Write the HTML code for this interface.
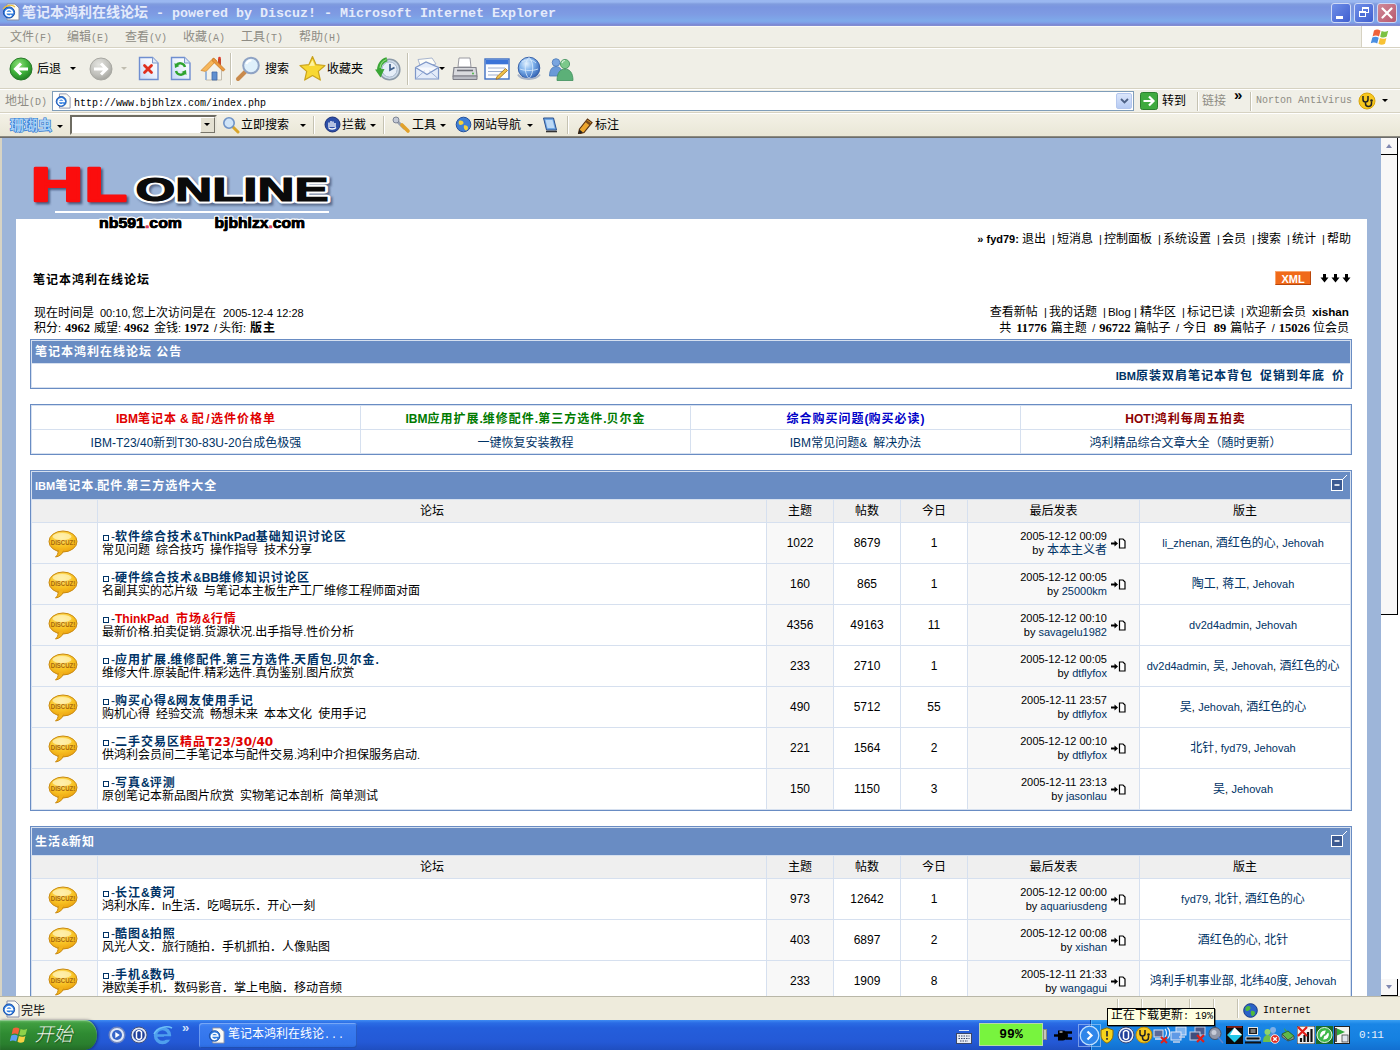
<!DOCTYPE html>
<html lang="zh-CN">
<head>
<meta charset="utf-8">
<title>笔记本鸿利在线论坛 - powered by Discuz!</title>
<style>
html,body{margin:0;padding:0;}
body{width:1400px;height:1050px;overflow:hidden;position:relative;background:#ece9d8;
 font-family:"Liberation Sans","Noto Sans CJK SC",sans-serif;font-size:12px;color:#000;line-height:15px;}
.abs{position:absolute;}
.ui{font-family:"Liberation Mono","Noto Sans CJK SC",monospace;}
/* ---------- title bar ---------- */
#titlebar{left:0;top:0;width:1400px;height:26px;
 background:linear-gradient(#9ab7f0 0,#9ab7f0 2px,#809cde 4px,#7a95e0 7px,#7e9be3 14px,#7eaaea 21px,#7f9ce6 23px,#7a86d0 25px,#8a94d4 26px);}
#titletext{left:22px;top:4px;height:17px;line-height:17px;font-size:14px;font-weight:bold;color:#e4ebfb;white-space:nowrap;letter-spacing:0;}
#titletext .l{font-family:"Liberation Mono",monospace;font-size:13.33px;}
.wbtn{top:3px;width:20px;height:20px;border-radius:3px;border:1px solid #cfdaf6;box-sizing:border-box;}
/* ---------- menu ---------- */
#menubar{left:0;top:26px;width:1400px;height:22px;background:#f0efe7;border-top:1px solid #fbfcf6;border-bottom:1px solid #d6d2c2;box-sizing:border-box;}
#menubar > span{position:absolute;top:4px;font-size:12px;color:#8e8c84;white-space:nowrap;line-height:15px;}
#menubar .l{font-family:"Liberation Mono",monospace;font-size:10px;}
#toolbar{left:0;top:48px;width:1400px;height:41px;background:#f0efe7;border-top:1px solid #fff;border-bottom:1px solid #d6d2c2;box-sizing:border-box;}
#addrbar{left:0;top:89px;width:1400px;height:24px;background:#f0efe7;border-top:1px solid #fff;border-bottom:1px solid #d6d2c2;box-sizing:border-box;}
#linkbar{left:0;top:113px;width:1400px;height:24px;background:linear-gradient(#f3f1e6,#e9e6d6);border-top:1px solid #fff;box-sizing:border-box;}
#chromeline{left:0;top:136px;width:1400px;height:2px;background:linear-gradient(#9c9a8c,#5d5e60);}
.tbtxt{position:absolute;font-size:12px;line-height:14px;white-space:nowrap;color:#000;}
.sep{position:absolute;width:1px;background:#c5c2b2;border-right:1px solid #fff;}
.dd{position:absolute;width:0;height:0;border-left:3px solid transparent;border-right:3px solid transparent;border-top:3px solid #000;}
/* ---------- viewport ---------- */
#leftedge{left:0;top:138px;width:2px;height:858px;background:#d8d4c4;}
#view{left:2px;top:138px;width:1379px;height:858px;background:#9db5d9;overflow:hidden;}
#vscroll{left:1381px;top:138px;width:19px;height:858px;background:#fff;}

/* ---------- page ---------- */
#page{position:absolute;left:-2px;top:-138px;width:1400px;height:1050px;word-spacing:2.7px;}
#wrap{left:16px;top:219px;width:1351px;height:800px;background:#fff;}
#page .l{font-size:11px;word-spacing:0;}
#page a{color:#003366;text-decoration:none;}
#page i{font-style:normal;font-size:11px;display:inline-block;width:11px;padding-left:6px;box-sizing:border-box;word-spacing:0;}
#page i.t{width:9px;padding-left:3px;}
#page i.s{width:12.4px;padding-left:5.5px;}
.sb{font-family:"Liberation Serif",serif;font-weight:bold;font-size:12.5px;word-spacing:0;}
.ln{height:15px;line-height:15px;white-space:nowrap;}
.ln > span{position:absolute;top:0;}
#page b{letter-spacing:1px;}
#page b.l,#page b .l{letter-spacing:0;}
.nav{white-space:nowrap;line-height:15px;}
.xml{left:1275px;top:271px;width:36px;height:14px;line-height:14px;background:#f06a1a;color:#fff;font-weight:bold;font-size:11px;text-align:center;border:1px solid #f8a46c;border-right-color:#b8470c;border-bottom-color:#b8470c;box-sizing:border-box;word-spacing:0;}
.arrows{left:1320px;top:271px;font-size:9px;line-height:14px;letter-spacing:1px;word-spacing:0;}
#flow{left:30px;top:339px;width:1322px;}
table.tb{border:1px solid #698cc3;background:#d6e0ef;border-spacing:1px;border-collapse:separate;margin:0 0 15px 0;width:1322px;table-layout:fixed;}
table.tb td{padding:0;font-size:12px;line-height:14px;}
td.hd{background:#698cc3;color:#fff;height:27px;padding-left:3px !important;position:relative;word-spacing:0;}
td.hd .col{position:absolute;right:1px;top:2px;}
tr.ch td{background:#efefef;height:22px;text-align:center;}
tr.r td{height:40px;}
.a1{background:#f8f8f8;}.a2{background:#fff;}
td.ic{text-align:center;}
td.ic svg{display:block;margin:1px auto 0 16px;}
td.fm{padding-left:4px !important;white-space:nowrap;}
.ft{line-height:14px;color:#003366;margin-top:0;position:relative;top:0;}
.ft b{color:#003366;}
.ft b.fr{color:#e00000;}
.ft b.fr2{color:#e00000;}
.ft .l{font-size:12px !important;}
.sq{display:inline-block;width:4px;height:4px;border:1px solid #003366;margin:0 2px 0 1px;vertical-align:0;}
.dj{font-family:"DejaVu Sans",sans-serif;font-size:12px;letter-spacing:0;}
.fd{line-height:13px;}
td.n{text-align:center;font-size:12px;}
td.lp{position:relative;white-space:nowrap;}
.lpt{position:absolute;right:32px;top:6px;text-align:right;line-height:14px;}
.lpi{position:absolute;right:13px;top:15px;}
td.md{text-align:center;white-space:nowrap;word-spacing:0;padding-right:4px !important;}
table.lk td{background:#fff;height:21px;padding-top:2px !important;text-align:center;width:329px;}
table.lk .l{font-size:12px !important;}
table.lk td:first-child{width:328px;}
.nv{color:#003366;}
/* ---------- status / taskbar ---------- */
#statusbar{left:0;top:996px;width:1400px;height:24px;background:#eeebdc;border-top:1px solid #b9b7a8;box-sizing:border-box;}
#taskbar{left:0;top:1020px;width:1400px;height:30px;
 background:linear-gradient(#3f8cf3 0,#2a6be4 3px,#245edb 8px,#2459d6 22px,#1f4ec0 30px);}
</style>
</head>
<body>
<!--CHROME-TOP-START-->
<div id="titlebar" class="abs"></div>
<svg class="abs" style="left:2px;top:3px" width="18" height="18" viewBox="0 0 18 18">
 <path d="M5 1h8l4 4v12H5z" fill="#fbfbf5" stroke="#8a8fa8" stroke-width="1"/>
 <circle cx="7" cy="9.5" r="5.6" fill="#2f7de0" stroke="#1b4fa8" stroke-width="1"/>
 <path d="M3.5 9.6h7a3.5 3.3 0 1 0-1 2.6" fill="none" stroke="#fff" stroke-width="1.6"/>
 <path d="M1 6c3-4 9-5 12-2" fill="none" stroke="#f0c030" stroke-width="1.2"/>
</svg>
<div id="titletext" class="abs">笔记本鸿利在线论坛<span class="l"> - powered by Discuz! - Microsoft Internet Explorer</span></div>
<div class="abs wbtn" style="left:1331px;background:linear-gradient(135deg,#6f8fe8,#3f5fd0);"><div class="abs" style="left:4px;top:12px;width:7px;height:3px;background:#fff"></div></div>
<div class="abs wbtn" style="left:1354px;background:linear-gradient(135deg,#6f8fe8,#3f5fd0);">
 <div class="abs" style="left:7px;top:3px;width:7px;height:6px;border:1px solid #fff;border-top-width:2px;box-sizing:border-box"></div>
 <div class="abs" style="left:4px;top:7px;width:7px;height:6px;border:1px solid #fff;border-top-width:2px;box-sizing:border-box;background:#4d6fd8"></div></div>
<div class="abs wbtn" style="left:1377px;background:linear-gradient(135deg,#d08a98,#b8586e);">
 <svg class="abs" style="left:3px;top:3px" width="12" height="12" viewBox="0 0 12 12"><path d="M1.5 1.5l9 9M10.5 1.5l-9 9" stroke="#fff" stroke-width="2.2" stroke-linecap="round"/></svg></div>

<div id="menubar" class="abs ui">
 <span style="left:10px">文件<span class="l">(F)</span></span>
 <span style="left:67px">编辑<span class="l">(E)</span></span>
 <span style="left:125px">查看<span class="l">(V)</span></span>
 <span style="left:183px">收藏<span class="l">(A)</span></span>
 <span style="left:241px">工具<span class="l">(T)</span></span>
 <span style="left:299px">帮助<span class="l">(H)</span></span>
</div>
<div class="abs" style="left:1361px;top:26px;width:39px;height:21px;background:#fff;border-left:1px solid #d6d2c2;box-sizing:border-box">
 <svg class="abs" style="left:8px;top:2px" width="22" height="18" viewBox="0 0 22 18">
  <path d="M4 2.5c2.5-1.4 4.5-1 6.5.2L9 8.6C7 7.4 5 7.2 2.6 8.4z" fill="#f0623a"/>
  <path d="M11.6 3c2 1 4.2 1.2 6.6-.2l-1.5 5.8c-2.4 1.3-4.400 1.200-6.500.1z" fill="#7cc242"/>
  <path d="M2.300 9.500c2.400-1.300 4.400-1 6.400.2L7.200 15.500c-2-1.200-4-1.500-6.400-.2z" fill="#4a8fe2"/>
  <path d="M9.900 10c2 1 4.200 1.300 6.500-.1L15 15.700c-2.400 1.300-4.400 1.200-6.500.1z" fill="#f8c234"/>
 </svg>
</div>

<div id="toolbar" class="abs"></div>
<!-- back -->
<svg class="abs" style="left:9px;top:57px" width="24" height="24" viewBox="0 0 24 24">
 <defs><radialGradient id="gb" cx="40%" cy="30%" r="75%"><stop offset="0" stop-color="#8fe07a"/><stop offset=".55" stop-color="#3fb13a"/><stop offset="1" stop-color="#1d7a22"/></radialGradient>
 <linearGradient id="pg" x1="0" y1="1" x2="1" y2="0"><stop offset="0" stop-color="#c4d8f8"/><stop offset=".6" stop-color="#f2f6fd"/><stop offset="1" stop-color="#ffffff"/></linearGradient><radialGradient id="gf" cx="40%" cy="30%" r="75%"><stop offset="0" stop-color="#e4e4e0"/><stop offset=".6" stop-color="#c2c2bd"/><stop offset="1" stop-color="#a0a09a"/></radialGradient></defs>
 <circle cx="12" cy="12" r="11" fill="url(#gb)" stroke="#2a7a2a" stroke-width="1"/>
 <path d="M19 12H7.500M12 6.500L6.500 12l5.500 5.500" fill="none" stroke="#fff" stroke-width="3" stroke-linejoin="miter"/>
</svg>
<div class="tbtxt" style="left:37px;top:62px">后退</div>
<div class="dd" style="left:70px;top:67px"></div>
<svg class="abs" style="left:89px;top:57px" width="24" height="24" viewBox="0 0 24 24">
 <circle cx="12" cy="12" r="11" fill="url(#gf)" stroke="#a8a8a2" stroke-width="1"/>
 <path d="M5 12h11.500M12 6.500l5.500 5.500-5.500 5.500" fill="none" stroke="#fff" stroke-width="3"/>
</svg>
<div class="dd" style="left:121px;top:67px;border-top-color:#c0bdb0"></div>
<!-- stop -->
<svg class="abs" style="left:138px;top:56px" width="22" height="25" viewBox="0 0 22 25">
 <path d="M1.500 1.500h13l5.500 5.500v16.500H1.500z" fill="url(#pg)" stroke="#6f8ed0" stroke-width="1.400"/>
 <path d="M14.500 1.500v5.500h5.500" fill="#dfe8f6" stroke="#7f9acb"/>
 <path d="M6.500 9.500l7 7M13.500 9.500l-7 7" stroke="#e0301e" stroke-width="2.800" stroke-linecap="round"/>
</svg>
<!-- refresh -->
<svg class="abs" style="left:170px;top:56px" width="22" height="25" viewBox="0 0 22 25">
 <path d="M1.500 1.500h13l5.500 5.500v16.500H1.500z" fill="url(#pg)" stroke="#6f8ed0" stroke-width="1.400"/>
 <path d="M14.500 1.500v5.500h5.500" fill="#dfe8f6" stroke="#7f9acb"/>
 <path d="M15 11a5 5 0 0 0-9-1.500" fill="none" stroke="#2fa32f" stroke-width="2.400"/>
 <path d="M4.500 7l.5 5 4.500-2z" fill="#2fa32f"/>
 <path d="M6 15a5 5 0 0 0 9 1.500" fill="none" stroke="#2fa32f" stroke-width="2.400"/>
 <path d="M16.500 19l-.5-5-4.500 2z" fill="#2fa32f"/>
</svg>
<!-- home -->
<svg class="abs" style="left:199px;top:55px" width="27" height="27" viewBox="0 0 27 27">
 <path d="M19 3.500h3v6.500h-3z" fill="#c5482c"/>
 <circle cx="20.500" cy="3" r="1.300" fill="#e03a2a"/>
 <path d="M7 13.500V25h15.500V13.500L15 6z" fill="#f4f2ea" stroke="#b8b0a0" stroke-width=".8"/>
 <path d="M2 15.500L14.500 3l3 2.500L7 16.500z" fill="#f6b65a" stroke="#d08830" stroke-width=".8"/>
 <path d="M14.500 3L26 14.500l-2 1.700L13 5.500z" fill="#ec9a3c" stroke="#c87a28" stroke-width=".8"/>
 <path d="M13 17h5v8h-5z" fill="#5f8fd0" stroke="#3f68a8" stroke-width=".8"/>
 <path d="M7 16.500v8.500" stroke="#9cb8dc" stroke-width="2"/>
</svg>
<div class="sep" style="left:230px;top:53px;height:32px"></div>
<!-- search -->
<svg class="abs" style="left:235px;top:56px" width="27" height="26" viewBox="0 0 27 26">
 <path d="M3 23l8.500-8.500" stroke="#c98a4c" stroke-width="4" stroke-linecap="round"/>
 <circle cx="16" cy="9.500" r="7.800" fill="#dff0fb" stroke="#8fa3c4" stroke-width="2"/>
 <path d="M11.500 8a5 5 0 0 1 5-3.500" fill="none" stroke="#fff" stroke-width="2"/>
</svg>
<div class="tbtxt" style="left:265px;top:62px">搜索</div>
<!-- star -->
<svg class="abs" style="left:299px;top:55px" width="27" height="27" viewBox="0 0 27 27">
 <path d="M13.500 1.500l3.600 8.200 8.900.8-6.700 5.900 2 8.700-7.800-4.600-7.800 4.600 2-8.700L1 10.500l8.900-.8z" fill="#f8d832" stroke="#c9a21c" stroke-width="1.200" stroke-linejoin="round"/>
 <path d="M13.500 5l2.400 5.800-5.900.3z" fill="#fdf3a0"/>
</svg>
<div class="tbtxt" style="left:327px;top:62px">收藏夹</div>
<!-- history -->
<svg class="abs" style="left:374px;top:56px" width="28" height="26" viewBox="0 0 28 26">
 <circle cx="15.500" cy="13.500" r="10.300" fill="#cfdcea" stroke="#8c9aa8" stroke-width="1.600"/>
 <circle cx="15.500" cy="13.500" r="7.600" fill="#e6eef8" stroke="#a8b8cc" stroke-width="1"/>
 <path d="M16 8v6l4.500-2.500" fill="none" stroke="#40608c" stroke-width="1.700"/>
 <path d="M13 3.200A10.500 10.500 0 0 0 5.500 16" fill="none" stroke="#3aa636" stroke-width="4"/>
 <path d="M1 13.500l9.500-.5-4 8.500z" fill="#3aa636"/>
 <path d="M12.500 3.500A10 10 0 0 0 6 12" fill="none" stroke="#8fdc7c" stroke-width="1.200"/>
</svg>
<div class="sep" style="left:407px;top:53px;height:32px"></div>
<!-- mail -->
<svg class="abs" style="left:414px;top:56px" width="26" height="26" viewBox="0 0 26 26">
 <path d="M4 3.500l14-1.500 4 6-15 4z" fill="#fdfdf8" stroke="#a9b6cf" stroke-width="1"/>
 <path d="M1.500 11.500L12 6l12.500 5.500v11.500h-23z" fill="#e4ecf9" stroke="#7d96c8" stroke-width="1.200"/>
 <path d="M1.500 11.500l11.500 7 11.500-7" fill="#f7f9fd" stroke="#7d96c8" stroke-width="1.200"/>
 <path d="M1.500 23l9-8M24.500 23l-9-8" stroke="#9fb3da" stroke-width="1"/>
</svg>
<div class="dd" style="left:439px;top:67px"></div>
<!-- print -->
<svg class="abs" style="left:452px;top:56px" width="26" height="26" viewBox="0 0 26 26">
 <path d="M7 2h11l1 9H6z" fill="#fff" stroke="#9a9aa0" stroke-width="1"/>
 <path d="M2 11.500h22l1 8.500H1z" fill="#d9dade" stroke="#85868e" stroke-width="1.200"/>
 <path d="M1 20h24v3.500H1z" fill="#b9bbc3" stroke="#7c7d86" stroke-width="1"/>
 <path d="M5 14.500h16" stroke="#6c6d75" stroke-width="1.600"/>
 <circle cx="21" cy="17.500" r="1" fill="#4fb848"/>
</svg>
<!-- edit -->
<svg class="abs" style="left:484px;top:57px" width="26" height="24" viewBox="0 0 26 24">
 <rect x="1" y="2" width="24" height="20" fill="#fcfdff" stroke="#3e6fc4" stroke-width="1.400"/>
 <rect x="1.700" y="2.700" width="22.600" height="4.600" fill="#3b74d8"/>
 <path d="M4 11h17M4 14.500h17M4 18h10" stroke="#9db0d0" stroke-width="1.200"/>
 <path d="M13 19.500l8.500-8 2 2-8.500 8-3 .8z" fill="#f0c24a" stroke="#9a6a1c" stroke-width=".8"/>
</svg>
<!-- globe -->
<svg class="abs" style="left:516px;top:56px" width="26" height="26" viewBox="0 0 26 26">
 <defs><radialGradient id="gg" cx="38%" cy="30%" r="75%"><stop offset="0" stop-color="#e4f2fe"/><stop offset=".45" stop-color="#7fb2ec"/><stop offset="1" stop-color="#2c5cb0"/></radialGradient></defs>
 <circle cx="13" cy="12" r="10.800" fill="url(#gg)" stroke="#3a62a8" stroke-width="1"/>
 <path d="M6 6c4-3 10-3 14 1M4 13c5 2 13 2 18 0M13 1.500c-5 5-5 16 0 21M13 1.500c5 5 5 16 0 21" fill="none" stroke="#dcecfc" stroke-width="1" opacity=".8"/>
 <path d="M2 18.500c3 5.500 17 6.500 22 0" fill="none" stroke="#a8b4c8" stroke-width="2"/>
</svg>
<!-- messenger -->
<svg class="abs" style="left:548px;top:56px" width="27" height="26" viewBox="0 0 27 26">
 <circle cx="8" cy="6.500" r="3.800" fill="#7aa6e0" stroke="#4a78b8" stroke-width=".8"/>
 <path d="M1.500 20c0-6.500 2.800-9.500 6.500-9.500s6.500 3 6.500 9.500z" fill="#6a9ad8" stroke="#4a78b8" stroke-width=".8"/>
 <circle cx="17" cy="8" r="4.600" fill="#7cc88a" stroke="#3f8f5c" stroke-width=".8"/>
 <path d="M9 24.500c0-8 3.500-11.500 8-11.500s8 3.500 8 11.500z" fill="#5cb078" stroke="#3f8f5c" stroke-width=".8"/>
 <path d="M14 7a3.500 3.500 0 0 1 3-2.500" fill="none" stroke="#d8f4dc" stroke-width="1.200"/>
</svg>

<div id="addrbar" class="abs"></div>
<div class="tbtxt ui" style="left:5px;top:95px;color:#8e8c84">地址<span style="font-family:'Liberation Mono',monospace;font-size:10px">(D)</span></div>
<div class="abs" style="left:52px;top:91px;width:1082px;height:20px;background:#fff;border:1px solid #7f9db9;box-sizing:border-box"></div>
<svg class="abs" style="left:55px;top:93px" width="16" height="16" viewBox="0 0 18 18">
 <path d="M5 1h8l4 4v12H5z" fill="#fbfbf5" stroke="#8a8fa8" stroke-width="1"/>
 <circle cx="7" cy="9.500" r="5.600" fill="#2f7de0" stroke="#1b4fa8" stroke-width="1"/>
 <path d="M3.500 9.600h7a3.500 3.300 0 1 0-1 2.600" fill="none" stroke="#fff" stroke-width="1.600"/>
</svg>
<div class="tbtxt" style="left:74px;top:97px;font-family:'Liberation Mono',monospace;font-size:10px;line-height:14px">http<span>:</span>//www.bjbhlzx.com/index.php</div>
<div class="abs" style="left:1116px;top:93px;width:16px;height:16px;background:linear-gradient(#dbe6fb,#b7cbf3);border:1px solid #b4c7ee;border-radius:2px;box-sizing:border-box">
 <svg class="abs" style="left:3px;top:4px" width="9" height="6" viewBox="0 0 9 6"><path d="M1 1l3.500 3.500L8 1" fill="none" stroke="#4d6185" stroke-width="1.800"/></svg></div>
<svg class="abs" style="left:1140px;top:92px" width="18" height="18" viewBox="0 0 18 18">
 <rect x=".5" y=".5" width="17" height="17" rx="2" fill="#3faa3f" stroke="#2c7f2e"/>
 <path d="M3.500 9h9M9 4.500L13.500 9 9 13.500" fill="none" stroke="#fff" stroke-width="2.200"/>
</svg>
<div class="tbtxt" style="left:1162px;top:94px">转到</div>
<div class="sep" style="left:1197px;top:92px;height:19px"></div>
<div class="tbtxt" style="left:1202px;top:94px;color:#8e8c84">链接</div>
<div class="tbtxt" style="left:1234px;top:88px;font-size:15px;font-weight:bold">»</div>
<div class="sep" style="left:1250px;top:92px;height:19px"></div>
<div class="tbtxt" style="left:1256px;top:94px;font-family:'Liberation Mono',monospace;font-size:10px;color:#8e8c84">Norton AntiVirus</div>
<svg class="abs" style="left:1358px;top:92px" width="18" height="18" viewBox="0 0 18 18">
 <circle cx="9" cy="9" r="8" fill="#f7c81e" stroke="#d9a40c" stroke-width="1"/>
 <path d="M5 4v3.500a2.500 2.500 0 0 0 5 0V4M7.500 10v1.500a3 3 0 0 0 6 0V9.500" fill="none" stroke="#222" stroke-width="1.500"/>
 <circle cx="13.500" cy="8.500" r="1.300" fill="#222"/>
</svg>
<div class="dd" style="left:1382px;top:99px"></div>

<div id="linkbar" class="abs"></div>
<div class="tbtxt" style="left:10px;top:118px;font-size:14px;line-height:15px;font-weight:bold;color:#a8d0f6;-webkit-text-stroke:1.2px #1c72d0;paint-order:stroke fill;letter-spacing:0">珊瑚虫</div>
<div class="dd" style="left:57px;top:125px"></div>
<div class="abs" style="left:70px;top:115px;width:147px;height:20px;background:#fff;border:2px solid;border-color:#6e6c62 #e8e6da #e8e6da #6e6c62;box-sizing:border-box">
 <div class="abs" style="right:0;top:0;width:15px;height:16px;background:#e4e1d2;border:1px solid;border-color:#fff #77756a #77756a #fff;box-sizing:border-box"><div class="dd" style="left:3px;top:5px"></div></div>
</div>
<svg class="abs" style="left:222px;top:116px" width="18" height="18" viewBox="0 0 18 18">
 <path d="M10.500 10.500l5.500 5.500" stroke="#d9a62a" stroke-width="3" stroke-linecap="round"/>
 <circle cx="7" cy="7" r="5.200" fill="#cfe4f7" stroke="#6f93c6" stroke-width="1.600"/>
</svg>
<div class="tbtxt" style="left:241px;top:118px">立即搜索</div>
<div class="dd" style="left:300px;top:124px"></div>
<div class="sep" style="left:313px;top:116px;height:18px"></div>
<svg class="abs" style="left:324px;top:116px" width="17" height="17" viewBox="0 0 17 17">
 <circle cx="8.500" cy="8.500" r="7.500" fill="#2c4fa8" stroke="#1a2f78"/>
 <path d="M5 11V6.500M7 11V5M9 11V5.500M11 11V7M4.500 11.500c1 2 6 2 7.500 0" fill="none" stroke="#fff" stroke-width="1.300"/>
</svg>
<div class="tbtxt" style="left:342px;top:118px">拦截</div>
<div class="dd" style="left:370px;top:124px"></div>
<div class="sep" style="left:383px;top:116px;height:18px"></div>
<svg class="abs" style="left:392px;top:116px" width="19" height="18" viewBox="0 0 19 18">
 <path d="M3 3l9 9" stroke="#9aa2b0" stroke-width="3" stroke-linecap="round"/>
 <circle cx="4" cy="4" r="3" fill="#c4cad6" stroke="#7d8596"/>
 <path d="M10 9l6 6" stroke="#e2a22a" stroke-width="3.600" stroke-linecap="round"/>
</svg>
<div class="tbtxt" style="left:412px;top:118px">工具</div>
<div class="dd" style="left:440px;top:124px"></div>
<svg class="abs" style="left:455px;top:116px" width="17" height="17" viewBox="0 0 17 17">
 <circle cx="8.500" cy="8.500" r="7.300" fill="#3f7fd6" stroke="#23509c"/>
 <path d="M4 5c2-1 4 0 4.500 1.500S7 9 5.500 9 3 7 4 5zM9 9.500c2-.5 4 .5 4 2.500s-2 3-3 2-1.500-3-1-4.500z" fill="#f4d23c"/>
</svg>
<div class="tbtxt" style="left:473px;top:118px">网站导航</div>
<div class="dd" style="left:527px;top:124px"></div>
<svg class="abs" style="left:542px;top:116px" width="16" height="18" viewBox="0 0 16 18">
 <path d="M1.500 2h10l3 12h-10z" fill="#6fa8e6" stroke="#2b4f8c"/>
 <path d="M4 15.500h11" stroke="#333" stroke-width="1.600"/>
 <path d="M3.500 4h7l2 8h-7z" fill="#bcd9f6"/>
</svg>
<div class="sep" style="left:567px;top:116px;height:18px"></div>
<svg class="abs" style="left:576px;top:116px" width="18" height="18" viewBox="0 0 18 18">
 <path d="M3.500 13L11.500 3l4.500 3.500L8 16.500l-5.500 1.500z" fill="#eda62c" stroke="#5a3210" stroke-width="1.200"/>
 <path d="M10 5l4.500 3.500" stroke="#7a4a18" stroke-width="2.400"/>
 <path d="M2 18l1.500-4.500 3.500 3z" fill="#222"/>
</svg>
<div class="tbtxt" style="left:595px;top:118px">标注</div>
<div id="chromeline" class="abs"></div>
<!--CHROME-TOP-END-->
<!--VIEW-START-->
<div id="leftedge" class="abs"></div>
<div id="view" class="abs"><div id="page">
<svg width="0" height="0" style="position:absolute"><defs><radialGradient id="dz" cx="45%" cy="30%" r="80%"><stop offset="0" stop-color="#ffe88a"/><stop offset=".5" stop-color="#f9c526"/><stop offset="1" stop-color="#e99a0a"/></radialGradient></defs></svg>
<div id="wrap" class="abs"></div>
<svg class="abs" style="left:26px;top:158px" width="312" height="80" viewBox="26 158 312 80">
 <defs><filter id="bl" x="-5%" y="-10%" width="110%" height="125%"><feGaussianBlur stdDeviation="1.100"/></filter></defs>
 <g font-family="Liberation Sans,sans-serif" font-weight="bold">
  <g fill="#2d3f63" stroke="#2d3f63" stroke-width="2.500" opacity=".75" filter="url(#bl)"><text x="32.800" y="202.600" font-size="48" textLength="52.500" lengthAdjust="spacingAndGlyphs">H</text><text x="86.500" y="202.600" font-size="48" textLength="42.500" lengthAdjust="spacingAndGlyphs">L</text></g>
  <g fill="#fb0d0d" stroke="#fb0d0d" stroke-width="2.500" stroke-linejoin="round"><text x="30.800" y="200.600" font-size="48" textLength="52.500" lengthAdjust="spacingAndGlyphs">H</text><text x="84.500" y="200.600" font-size="48" textLength="42.500" lengthAdjust="spacingAndGlyphs">L</text></g>
  <text x="137.500" y="203.300" font-size="33.500" textLength="193" lengthAdjust="spacingAndGlyphs" fill="#3a4a6a" opacity=".7" filter="url(#bl)" stroke="#3a4a6a" stroke-width="5">ONLINE</text>
  <text x="135.500" y="201.300" font-size="33.500" textLength="193" lengthAdjust="spacingAndGlyphs" fill="#0a0a0a" stroke="#fff" stroke-width="5" stroke-linejoin="round" paint-order="stroke fill">ONLINE</text>
  <text x="135.500" y="201.300" font-size="33.500" textLength="193" lengthAdjust="spacingAndGlyphs" fill="#0a0a0a" stroke="#0a0a0a" stroke-width="1.200">ONLINE</text>
 </g>
 <rect x="55" y="211" width="274" height="2" fill="#fff"/>
 <g font-family="Liberation Sans,sans-serif" font-weight="bold" font-size="14.500" stroke-linejoin="round">
  <text x="99" y="228" textLength="83" lengthAdjust="spacingAndGlyphs" fill="#000" stroke="#fff" stroke-width="3" paint-order="stroke fill">nb591<tspan fill="#e0405a">.</tspan>com</text>
  <text x="99" y="228" textLength="83" lengthAdjust="spacingAndGlyphs" fill="#000" stroke="#000" stroke-width=".700">nb591<tspan fill="#e0405a" stroke="#e0405a">.</tspan>com</text>
  <text x="214.500" y="228" textLength="90.500" lengthAdjust="spacingAndGlyphs" fill="#000" stroke="#fff" stroke-width="3" paint-order="stroke fill">bjbhlzx<tspan fill="#e0405a">.</tspan>com</text>
  <text x="214.500" y="228" textLength="90.500" lengthAdjust="spacingAndGlyphs" fill="#000" stroke="#000" stroke-width=".700">bjbhlzx<tspan fill="#e0405a" stroke="#e0405a">.</tspan>com</text>
 </g>
</svg>

<div class="abs nav" style="right:49px;top:232px"><b class="l">»&nbsp;fyd79:</b><span style="margin-left:3px">退出</span><i>|</i>短消息<i>|</i>控制面板<i>|</i>系统设置<i>|</i>会员<i>|</i>搜索<i>|</i>统计<i>|</i>帮助</div>
<div class="abs" style="left:33px;top:273px;line-height:15px"><b>笔记本鸿利在线论坛</b></div>
<div class="abs xml">XML</div>
<svg class="abs" style="left:1320px;top:274px" width="31" height="9" viewBox="0 0 31 9"><path id="dar" d="M3 0h3v3.500h2.500L4.500 8.500 .5 3.500H3z" fill="#000"/><path d="M3 0h3v3.500h2.500L4.500 8.500 .5 3.500H3z" transform="translate(11,0)"/><path d="M3 0h3v3.500h2.500L4.500 8.500 .5 3.500H3z" transform="translate(22,0)"/></svg>
<div class="abs ln" style="left:0;top:306px">
<span style="left:34px">现在时间是</span><span class="l" style="left:100px">00:10,</span><span style="left:132px">您上次访问是在</span><span class="l" style="left:223px">2005-12-4 12:28</span>
</div>
<div class="abs ln" style="left:0;top:321px">
<span style="left:34px">积分<span class="l">:</span></span><span class="sb" style="left:65px">4962</span><span style="left:94px">威望<span class="l">:</span></span><span class="sb" style="left:124px">4962</span><span style="left:154px">金钱<span class="l">:</span></span><span class="sb" style="left:184px">1972</span><span class="l" style="left:214px">/</span><span style="left:219px">头衔<span class="l">:</span></span><span style="left:250px"><b>版主</b></span>
</div>
<div class="abs nav" style="right:51px;top:304px">查看新帖<i>|</i>我的话题<i>|</i><span class="l" style="font-size:11.5px">Blog</span><i class="t">|</i>精华区<i>|</i>标记已读<i>|</i>欢迎新会员<b class="l" style="margin-left:6px;font-size:11.7px">xishan</b></div>
<div class="abs nav" style="right:51px;top:321px">共<span class="sb" style="margin:0 4px 0 5px">11776</span>篇主题<i class="s">/</i><span class="sb" style="margin:0 4px 0 0">96722</span>篇帖子<i class="s">/</i>今日<span class="sb" style="margin:0 4px 0 7px">89</span>篇帖子<i class="s">/</i><span class="sb" style="margin:0 3px 0 0">15026</span>位会员</div>
<div id="flow" class="abs">
<table class="tb" cellspacing="1" cellpadding="0"><tr><td class="hd" style="height:22px"><b>笔记本鸿利在线论坛 公告</b></td></tr>
<tr><td class="a2" style="height:23px;text-align:right;padding-right:5px;width:1313px"><b class="nv"><span class="l">IBM</span>原装双肩笔记本背包 促销到年底 价</b></td></tr></table>
<table class="tb lk" cellspacing="1" cellpadding="0">
<tr><td><b style="color:#e00000"><span class="l">IBM</span>笔记本<span class="l" style="padding:0 3px">&amp;</span>配<span class="l" style="padding:0 1.5px">/</span>选件价格单</b></td><td><b style="color:#007a00"><span class="l">IBM</span>应用扩展<span class="l">.</span>维修配件<span class="l">.</span>第三方选件<span class="l">.</span>贝尔金</b></td><td><b style="color:#0000c8">综合购买问题<span class="l">(</span>购买必读<span class="l">)</span></b></td><td><b style="color:#8b0000"><span class="l">HOT!</span>鸿利每周五拍卖</b></td></tr>
<tr><td><a><span class="l">IBM-T23/40</span>新到<span class="l">T30-83U-20</span>台成色极强</a></td><td><a>一键恢复安装教程</a></td><td><a><span class="l">IBM</span>常见问题<span class="l">&amp;</span> 解决办法</a></td><td><a>鸿利精品综合文章大全（随时更新）</a></td></tr>
</table>
<table class="tb" cellspacing="1" cellpadding="0"><colgroup><col style="width:65px"><col style="width:668px"><col style="width:66px"><col style="width:66px"><col style="width:66px"><col style="width:171px"><col style="width:210px"></colgroup><tr><td colspan="7" class="hd"><b><span class="l">IBM</span>笔记本<span class="l">.</span>配件<span class="l">.</span>第三方选件大全</b><svg class="col" width="18" height="17" viewBox="0 0 18 17"><rect x=".5" y="5.500" width="11" height="11" fill="#3c5a92" stroke="#fff" stroke-width="1"/><path d="M3.500 11h5" stroke="#fff" stroke-width="1.600"/><path d="M11.500 5.500l4.500-4.500" fill="none" stroke="#fff" stroke-width="1"/></svg></td></tr>
<tr class="ch"><td></td><td>论坛</td><td>主题</td><td>帖数</td><td>今日</td><td>最后发表</td><td>版主</td></tr>
<tr class="r"><td class="a1 ic"><svg width="30" height="28" viewBox="0 0 30 28"><ellipse cx="15" cy="11.5" rx="14" ry="10.5" fill="url(#dz)" stroke="#c98a12" stroke-width="1"/><path d="M10 20.500c.5 3-1 5-2.500 6.500 4-.5 7-3 8-6.500z" fill="#f3b41c" stroke="#c98a12" stroke-width="1"/><path d="M10.600 20.300l5 .1" stroke="#f3b41c" stroke-width="1.600"/><ellipse cx="14" cy="6.500" rx="9.500" ry="3.500" fill="#fff3b8" opacity=".75"/><text x="2.800" y="14.600" font-family="Liberation Sans,sans-serif" font-weight="bold" font-size="7.600" fill="#a8680c" textLength="24.500" lengthAdjust="spacingAndGlyphs">DISCUZ!</text></svg></td><td class="a2 fm"><div class="ft"><span class="sq"></span><span class="l">-</span><b>软件综合技术<span class="l">&amp;ThinkPad</span>基础知识讨论区</b></div><div class="fd">常见问题 综合技巧 操作指导 技术分享</div></td><td class="a1 n">1022</td><td class="a2 n">8679</td><td class="a2 n">1</td><td class="a1 lp"><div class="lpt"><span class="l">2005-12-12 00:09</span><br><span class="l">by </span><a>本本主义者</a></div><svg class="lpi" width="15" height="11" viewBox="0 0 15 11"><path d="M0 4.500h3.500V2.500L7 5.500 3.500 8.500V6.500H0z" fill="#000"/><path d="M8.500 1h3.500l2 2v7h-5.500z" fill="#fff" stroke="#000" stroke-width="1.200"/></svg></td><td class="a2 md"><a><span class="l">li_zhenan</span></a><span class="l">,</span> <a>酒红色的心</a><span class="l">,</span> <a><span class="l">Jehovah</span></a></td></tr>
<tr class="r"><td class="a1 ic"><svg width="30" height="28" viewBox="0 0 30 28"><ellipse cx="15" cy="11.5" rx="14" ry="10.5" fill="url(#dz)" stroke="#c98a12" stroke-width="1"/><path d="M10 20.500c.5 3-1 5-2.500 6.500 4-.5 7-3 8-6.500z" fill="#f3b41c" stroke="#c98a12" stroke-width="1"/><path d="M10.600 20.300l5 .1" stroke="#f3b41c" stroke-width="1.600"/><ellipse cx="14" cy="6.500" rx="9.500" ry="3.500" fill="#fff3b8" opacity=".75"/><text x="2.800" y="14.600" font-family="Liberation Sans,sans-serif" font-weight="bold" font-size="7.600" fill="#a8680c" textLength="24.500" lengthAdjust="spacingAndGlyphs">DISCUZ!</text></svg></td><td class="a2 fm"><div class="ft"><span class="sq"></span><span class="l">-</span><b>硬件综合技术<span class="l">&amp;BB</span>维修知识讨论区</b></div><div class="fd">名副其实的芯片级 与笔记本主板生产工厂维修工程师面对面</div></td><td class="a1 n">160</td><td class="a2 n">865</td><td class="a2 n">1</td><td class="a1 lp"><div class="lpt"><span class="l">2005-12-12 00:05</span><br><span class="l">by </span><a><span class="l">25000km</span></a></div><svg class="lpi" width="15" height="11" viewBox="0 0 15 11"><path d="M0 4.500h3.500V2.500L7 5.500 3.500 8.500V6.500H0z" fill="#000"/><path d="M8.500 1h3.500l2 2v7h-5.500z" fill="#fff" stroke="#000" stroke-width="1.200"/></svg></td><td class="a2 md"><a>陶工</a><span class="l">,</span> <a>蒋工</a><span class="l">,</span> <a><span class="l">Jehovah</span></a></td></tr>
<tr class="r"><td class="a1 ic"><svg width="30" height="28" viewBox="0 0 30 28"><ellipse cx="15" cy="11.5" rx="14" ry="10.5" fill="url(#dz)" stroke="#c98a12" stroke-width="1"/><path d="M10 20.500c.5 3-1 5-2.500 6.500 4-.5 7-3 8-6.500z" fill="#f3b41c" stroke="#c98a12" stroke-width="1"/><path d="M10.600 20.300l5 .1" stroke="#f3b41c" stroke-width="1.600"/><ellipse cx="14" cy="6.500" rx="9.500" ry="3.500" fill="#fff3b8" opacity=".75"/><text x="2.800" y="14.600" font-family="Liberation Sans,sans-serif" font-weight="bold" font-size="7.600" fill="#a8680c" textLength="24.500" lengthAdjust="spacingAndGlyphs">DISCUZ!</text></svg></td><td class="a2 fm"><div class="ft"><span class="sq"></span><span class="l">-</span><b class="fr"><span class="l">ThinkPad</span> 市场<span class="l">&amp;</span>行情</b></div><div class="fd">最新价格<span class="l">.</span>拍卖促销<span class="l">.</span>货源状况<span class="l">.</span>出手指导<span class="l">.</span>性价分析</div></td><td class="a1 n">4356</td><td class="a2 n">49163</td><td class="a2 n">11</td><td class="a1 lp"><div class="lpt"><span class="l">2005-12-12 00:10</span><br><span class="l">by </span><a><span class="l">savagelu1982</span></a></div><svg class="lpi" width="15" height="11" viewBox="0 0 15 11"><path d="M0 4.500h3.500V2.500L7 5.500 3.500 8.500V6.500H0z" fill="#000"/><path d="M8.500 1h3.500l2 2v7h-5.500z" fill="#fff" stroke="#000" stroke-width="1.200"/></svg></td><td class="a2 md"><a><span class="l">dv2d4admin</span></a><span class="l">,</span> <a><span class="l">Jehovah</span></a></td></tr>
<tr class="r"><td class="a1 ic"><svg width="30" height="28" viewBox="0 0 30 28"><ellipse cx="15" cy="11.5" rx="14" ry="10.5" fill="url(#dz)" stroke="#c98a12" stroke-width="1"/><path d="M10 20.500c.5 3-1 5-2.500 6.500 4-.5 7-3 8-6.500z" fill="#f3b41c" stroke="#c98a12" stroke-width="1"/><path d="M10.600 20.300l5 .1" stroke="#f3b41c" stroke-width="1.600"/><ellipse cx="14" cy="6.500" rx="9.500" ry="3.500" fill="#fff3b8" opacity=".75"/><text x="2.800" y="14.600" font-family="Liberation Sans,sans-serif" font-weight="bold" font-size="7.600" fill="#a8680c" textLength="24.500" lengthAdjust="spacingAndGlyphs">DISCUZ!</text></svg></td><td class="a2 fm"><div class="ft"><span class="sq"></span><span class="l">-</span><b>应用扩展<span class="l">.</span>维修配件<span class="l">.</span>第三方选件<span class="l">.</span>天盾包<span class="l">.</span>贝尔金<span class="l">.</span></b></div><div class="fd">维修大件<span class="l">.</span>原装配件<span class="l">.</span>精彩选件<span class="l">.</span>真伪鉴别<span class="l">.</span>图片欣赏</div></td><td class="a1 n">233</td><td class="a2 n">2710</td><td class="a2 n">1</td><td class="a1 lp"><div class="lpt"><span class="l">2005-12-12 00:05</span><br><span class="l">by </span><a><span class="l">dtflyfox</span></a></div><svg class="lpi" width="15" height="11" viewBox="0 0 15 11"><path d="M0 4.500h3.500V2.500L7 5.500 3.500 8.500V6.500H0z" fill="#000"/><path d="M8.500 1h3.500l2 2v7h-5.500z" fill="#fff" stroke="#000" stroke-width="1.200"/></svg></td><td class="a2 md"><a><span class="l">dv2d4admin</span></a><span class="l">,</span> <a>吴</a><span class="l">,</span> <a><span class="l">Jehovah</span></a><span class="l">,</span> <a>酒红色的心</a></td></tr>
<tr class="r"><td class="a1 ic"><svg width="30" height="28" viewBox="0 0 30 28"><ellipse cx="15" cy="11.5" rx="14" ry="10.5" fill="url(#dz)" stroke="#c98a12" stroke-width="1"/><path d="M10 20.500c.5 3-1 5-2.500 6.500 4-.5 7-3 8-6.500z" fill="#f3b41c" stroke="#c98a12" stroke-width="1"/><path d="M10.600 20.300l5 .1" stroke="#f3b41c" stroke-width="1.600"/><ellipse cx="14" cy="6.500" rx="9.500" ry="3.500" fill="#fff3b8" opacity=".75"/><text x="2.800" y="14.600" font-family="Liberation Sans,sans-serif" font-weight="bold" font-size="7.600" fill="#a8680c" textLength="24.500" lengthAdjust="spacingAndGlyphs">DISCUZ!</text></svg></td><td class="a2 fm"><div class="ft"><span class="sq"></span><span class="l">-</span><b>购买心得<span class="l">&amp;</span>网友使用手记</b></div><div class="fd">购机心得 经验交流 畅想未来 本本文化 使用手记</div></td><td class="a1 n">490</td><td class="a2 n">5712</td><td class="a2 n">55</td><td class="a1 lp"><div class="lpt"><span class="l">2005-12-11 23:57</span><br><span class="l">by </span><a><span class="l">dtflyfox</span></a></div><svg class="lpi" width="15" height="11" viewBox="0 0 15 11"><path d="M0 4.500h3.500V2.500L7 5.500 3.500 8.500V6.500H0z" fill="#000"/><path d="M8.500 1h3.500l2 2v7h-5.500z" fill="#fff" stroke="#000" stroke-width="1.200"/></svg></td><td class="a2 md"><a>吴</a><span class="l">,</span> <a><span class="l">Jehovah</span></a><span class="l">,</span> <a>酒红色的心</a></td></tr>
<tr class="r"><td class="a1 ic"><svg width="30" height="28" viewBox="0 0 30 28"><ellipse cx="15" cy="11.5" rx="14" ry="10.5" fill="url(#dz)" stroke="#c98a12" stroke-width="1"/><path d="M10 20.500c.5 3-1 5-2.500 6.500 4-.5 7-3 8-6.500z" fill="#f3b41c" stroke="#c98a12" stroke-width="1"/><path d="M10.600 20.300l5 .1" stroke="#f3b41c" stroke-width="1.600"/><ellipse cx="14" cy="6.500" rx="9.500" ry="3.500" fill="#fff3b8" opacity=".75"/><text x="2.800" y="14.600" font-family="Liberation Sans,sans-serif" font-weight="bold" font-size="7.600" fill="#a8680c" textLength="24.500" lengthAdjust="spacingAndGlyphs">DISCUZ!</text></svg></td><td class="a2 fm"><div class="ft"><span class="sq"></span><span class="l">-</span><b>二手交易区</b><b class="fr2">精品<span class="dj">T23/30/40</span></b></div><div class="fd">供鸿利会员间二手笔记本与配件交易<span class="l">.</span>鸿利中介担保服务启动<span class="l">.</span></div></td><td class="a1 n">221</td><td class="a2 n">1564</td><td class="a2 n">2</td><td class="a1 lp"><div class="lpt"><span class="l">2005-12-12 00:10</span><br><span class="l">by </span><a><span class="l">dtflyfox</span></a></div><svg class="lpi" width="15" height="11" viewBox="0 0 15 11"><path d="M0 4.500h3.500V2.500L7 5.500 3.500 8.500V6.500H0z" fill="#000"/><path d="M8.500 1h3.500l2 2v7h-5.500z" fill="#fff" stroke="#000" stroke-width="1.200"/></svg></td><td class="a2 md"><a>北针</a><span class="l">,</span> <a><span class="l">fyd79</span></a><span class="l">,</span> <a><span class="l">Jehovah</span></a></td></tr>
<tr class="r"><td class="a1 ic"><svg width="30" height="28" viewBox="0 0 30 28"><ellipse cx="15" cy="11.5" rx="14" ry="10.5" fill="url(#dz)" stroke="#c98a12" stroke-width="1"/><path d="M10 20.500c.5 3-1 5-2.500 6.500 4-.5 7-3 8-6.500z" fill="#f3b41c" stroke="#c98a12" stroke-width="1"/><path d="M10.600 20.300l5 .1" stroke="#f3b41c" stroke-width="1.600"/><ellipse cx="14" cy="6.500" rx="9.500" ry="3.500" fill="#fff3b8" opacity=".75"/><text x="2.800" y="14.600" font-family="Liberation Sans,sans-serif" font-weight="bold" font-size="7.600" fill="#a8680c" textLength="24.500" lengthAdjust="spacingAndGlyphs">DISCUZ!</text></svg></td><td class="a2 fm"><div class="ft"><span class="sq"></span><span class="l">-</span><b>写真<span class="l">&amp;</span>评测</b></div><div class="fd">原创笔记本新品图片欣赏 实物笔记本剖析 简单测试</div></td><td class="a1 n">150</td><td class="a2 n">1150</td><td class="a2 n">3</td><td class="a1 lp"><div class="lpt"><span class="l">2005-12-11 23:13</span><br><span class="l">by </span><a><span class="l">jasonlau</span></a></div><svg class="lpi" width="15" height="11" viewBox="0 0 15 11"><path d="M0 4.500h3.500V2.500L7 5.500 3.500 8.500V6.500H0z" fill="#000"/><path d="M8.500 1h3.500l2 2v7h-5.500z" fill="#fff" stroke="#000" stroke-width="1.200"/></svg></td><td class="a2 md"><a>吴</a><span class="l">,</span> <a><span class="l">Jehovah</span></a></td></tr>
</table>
<table class="tb" cellspacing="1" cellpadding="0"><colgroup><col style="width:65px"><col style="width:668px"><col style="width:66px"><col style="width:66px"><col style="width:66px"><col style="width:171px"><col style="width:210px"></colgroup><tr><td colspan="7" class="hd"><b>生活<span class="l">&amp;</span>新知</b><svg class="col" width="18" height="17" viewBox="0 0 18 17"><rect x=".5" y="5.500" width="11" height="11" fill="#3c5a92" stroke="#fff" stroke-width="1"/><path d="M3.500 11h5" stroke="#fff" stroke-width="1.600"/><path d="M11.500 5.500l4.500-4.500" fill="none" stroke="#fff" stroke-width="1"/></svg></td></tr>
<tr class="ch"><td></td><td>论坛</td><td>主题</td><td>帖数</td><td>今日</td><td>最后发表</td><td>版主</td></tr>
<tr class="r"><td class="a1 ic"><svg width="30" height="28" viewBox="0 0 30 28"><ellipse cx="15" cy="11.5" rx="14" ry="10.5" fill="url(#dz)" stroke="#c98a12" stroke-width="1"/><path d="M10 20.500c.5 3-1 5-2.500 6.500 4-.5 7-3 8-6.500z" fill="#f3b41c" stroke="#c98a12" stroke-width="1"/><path d="M10.600 20.300l5 .1" stroke="#f3b41c" stroke-width="1.600"/><ellipse cx="14" cy="6.500" rx="9.500" ry="3.500" fill="#fff3b8" opacity=".75"/><text x="2.800" y="14.600" font-family="Liberation Sans,sans-serif" font-weight="bold" font-size="7.600" fill="#a8680c" textLength="24.500" lengthAdjust="spacingAndGlyphs">DISCUZ!</text></svg></td><td class="a2 fm"><div class="ft"><span class="sq"></span><span class="l">-</span><b>长江<span class="l">&amp;</span>黄河</b></div><div class="fd">鸿利水库．<span class="l">In</span>生活．吃喝玩乐．开心一刻</div></td><td class="a1 n">973</td><td class="a2 n">12642</td><td class="a2 n">1</td><td class="a1 lp"><div class="lpt"><span class="l">2005-12-12 00:00</span><br><span class="l">by </span><a><span class="l">aquariusdeng</span></a></div><svg class="lpi" width="15" height="11" viewBox="0 0 15 11"><path d="M0 4.500h3.500V2.500L7 5.500 3.500 8.500V6.500H0z" fill="#000"/><path d="M8.500 1h3.500l2 2v7h-5.500z" fill="#fff" stroke="#000" stroke-width="1.200"/></svg></td><td class="a2 md"><a><span class="l">fyd79</span></a><span class="l">,</span> <a>北针</a><span class="l">,</span> <a>酒红色的心</a></td></tr>
<tr class="r"><td class="a1 ic"><svg width="30" height="28" viewBox="0 0 30 28"><ellipse cx="15" cy="11.5" rx="14" ry="10.5" fill="url(#dz)" stroke="#c98a12" stroke-width="1"/><path d="M10 20.500c.5 3-1 5-2.500 6.500 4-.5 7-3 8-6.500z" fill="#f3b41c" stroke="#c98a12" stroke-width="1"/><path d="M10.600 20.300l5 .1" stroke="#f3b41c" stroke-width="1.600"/><ellipse cx="14" cy="6.500" rx="9.500" ry="3.500" fill="#fff3b8" opacity=".75"/><text x="2.800" y="14.600" font-family="Liberation Sans,sans-serif" font-weight="bold" font-size="7.600" fill="#a8680c" textLength="24.500" lengthAdjust="spacingAndGlyphs">DISCUZ!</text></svg></td><td class="a2 fm"><div class="ft"><span class="sq"></span><span class="l">-</span><b>酷图<span class="l">&amp;</span>拍照</b></div><div class="fd">风光人文．旅行随拍．手机抓拍．人像贴图</div></td><td class="a1 n">403</td><td class="a2 n">6897</td><td class="a2 n">2</td><td class="a1 lp"><div class="lpt"><span class="l">2005-12-12 00:08</span><br><span class="l">by </span><a><span class="l">xishan</span></a></div><svg class="lpi" width="15" height="11" viewBox="0 0 15 11"><path d="M0 4.500h3.500V2.500L7 5.500 3.500 8.500V6.500H0z" fill="#000"/><path d="M8.500 1h3.500l2 2v7h-5.500z" fill="#fff" stroke="#000" stroke-width="1.200"/></svg></td><td class="a2 md"><a>酒红色的心</a><span class="l">,</span> <a>北针</a></td></tr>
<tr class="r"><td class="a1 ic"><svg width="30" height="28" viewBox="0 0 30 28"><ellipse cx="15" cy="11.5" rx="14" ry="10.5" fill="url(#dz)" stroke="#c98a12" stroke-width="1"/><path d="M10 20.500c.5 3-1 5-2.500 6.500 4-.5 7-3 8-6.500z" fill="#f3b41c" stroke="#c98a12" stroke-width="1"/><path d="M10.600 20.300l5 .1" stroke="#f3b41c" stroke-width="1.600"/><ellipse cx="14" cy="6.500" rx="9.500" ry="3.500" fill="#fff3b8" opacity=".75"/><text x="2.800" y="14.600" font-family="Liberation Sans,sans-serif" font-weight="bold" font-size="7.600" fill="#a8680c" textLength="24.500" lengthAdjust="spacingAndGlyphs">DISCUZ!</text></svg></td><td class="a2 fm"><div class="ft"><span class="sq"></span><span class="l">-</span><b>手机<span class="l">&amp;</span>数码</b></div><div class="fd">港欧美手机．数码影音．掌上电脑．移动音频</div></td><td class="a1 n">233</td><td class="a2 n">1909</td><td class="a2 n">8</td><td class="a1 lp"><div class="lpt"><span class="l">2005-12-11 21:33</span><br><span class="l">by </span><a><span class="l">wangagui</span></a></div><svg class="lpi" width="15" height="11" viewBox="0 0 15 11"><path d="M0 4.500h3.500V2.500L7 5.500 3.500 8.500V6.500H0z" fill="#000"/><path d="M8.500 1h3.500l2 2v7h-5.500z" fill="#fff" stroke="#000" stroke-width="1.200"/></svg></td><td class="a2 md"><a>鸿利手机事业部</a><span class="l">,</span> <a>北纬<span class="l">40</span>度</a><span class="l">,</span> <a><span class="l">Jehovah</span></a></td></tr>
</table>

</div>
</div></div>
<div id="vscroll" class="abs">
 <div class="abs" style="left:0;top:0;width:16px;height:16px;background:#f8f7f7;border-right:1px solid #000;border-bottom:1px solid #000"><div class="abs" style="left:5px;top:6px;width:0;height:0;border-left:3.500px solid transparent;border-right:3.500px solid transparent;border-bottom:4px solid #8088b0"></div></div>
 <div class="abs" style="left:0;top:17px;width:16px;height:459px;background:#f8f7f7;border-right:1px solid #000;border-bottom:1px solid #000"></div>
 <div class="abs" style="left:0;top:841px;width:16px;height:16px;background:#f8f7f7;border-right:1px solid #000;border-bottom:1px solid #000"><div class="abs" style="left:5px;top:6px;width:0;height:0;border-left:3.500px solid transparent;border-right:3.500px solid transparent;border-top:4px solid #8088b0"></div></div>
</div>
<!--VIEW-END-->
<!--CHROME-BOTTOM-START-->
<div id="statusbar" class="abs"></div>
<svg class="abs" style="left:2px;top:1000px" width="18" height="18" viewBox="0 0 18 18">
 <path d="M5 1h8l4 4v12H5z" fill="#fbfbf5" stroke="#8a8fa8" stroke-width="1"/>
 <circle cx="7" cy="9.500" r="5.600" fill="#2f7de0" stroke="#1b4fa8" stroke-width="1"/>
 <path d="M3.500 9.600h7a3.500 3.300 0 1 0-1 2.600" fill="none" stroke="#fff" stroke-width="1.600"/>
</svg>
<div class="tbtxt" style="left:21px;top:1004px">完毕</div>
<div class="sep" style="left:1117px;top:999px;height:19px"></div>
<div class="sep" style="left:1141px;top:999px;height:19px"></div>
<div class="sep" style="left:1165px;top:999px;height:19px"></div>
<div class="sep" style="left:1189px;top:999px;height:19px"></div>
<div class="sep" style="left:1213px;top:999px;height:19px"></div>
<div class="sep" style="left:1237px;top:999px;height:19px"></div>
<svg class="abs" style="left:1243px;top:1003px" width="15" height="15" viewBox="0 0 15 15">
 <circle cx="7.500" cy="7.500" r="6.800" fill="#2a62c8" stroke="#163a86" stroke-width="1"/>
 <path d="M3 4c2-1.500 4-1 4.500.5S6 7.500 4.500 8 1.500 6 3 4zM8 8c2-.5 4 0 4 2s-2 3.500-3 3-1.500-3-1-5z" fill="#4fb83c"/>
</svg>
<div class="tbtxt" style="left:1263px;top:1004px;font-family:'Liberation Mono',monospace;font-size:10px">Internet</div>

<div id="taskbar" class="abs"></div>
<div class="abs" style="left:0;top:1020px;width:97px;height:30px;border-radius:0 12px 12px 0/0 15px 15px 0;background:linear-gradient(#5eb35e 0,#3f9d3f 12%,#2f8b32 45%,#2a7f2e 80%,#236a27 100%);box-shadow:1px 0 3px rgba(0,0,30,.5), inset 0 1px 1px rgba(255,255,255,.35)"></div>
<svg class="abs" style="left:9px;top:1024px" width="22" height="22" viewBox="0 0 22 18">
  <path d="M4 2.500c2.500-1.400 4.500-1 6.500.2L9 8.600C7 7.400 5 7.200 2.600 8.400z" fill="#f0623a"/>
  <path d="M11.600 3c2 1 4.200 1.200 6.600-.2l-1.500 5.800c-2.400 1.300-4.400 1.200-6.500.1z" fill="#8fd24a"/>
  <path d="M2.300 9.500c2.400-1.300 4.400-1 6.400.2L7.200 15.500c-2-1.200-4-1.500-6.400-.2z" fill="#5a9ff2"/>
  <path d="M9.900 10c2 1 4.200 1.300 6.500-.1L15 15.700c-2.400 1.300-4.400 1.200-6.500.1z" fill="#f8d244"/>
</svg>
<div class="abs" style="left:36px;top:1023px;font-size:19px;line-height:24px;font-weight:300;color:#eef4e8;white-space:nowrap;transform:skewX(-14deg);text-shadow:1px 1px 1px rgba(0,0,0,.4)">开始</div>
<!-- quick launch -->
<svg class="abs" style="left:108px;top:1026px" width="18" height="18" viewBox="0 0 18 18"><circle cx="9" cy="9" r="7.800" fill="#dfe8f8" stroke="#6f86c0" stroke-width="1.400"/><circle cx="9" cy="9" r="5" fill="#3565c8"/><path d="M7.300 6l4.500 3-4.500 3z" fill="#fff"/></svg>
<svg class="abs" style="left:130px;top:1026px" width="18" height="18" viewBox="0 0 18 18"><circle cx="9" cy="9" r="8" fill="#dfe6f4" stroke="#44527a" stroke-width="1"/><circle cx="9" cy="9" r="5.800" fill="#1f3f9a"/><path d="M6.500 12.500v-7M11.500 12.500v-7M6.500 6c1.500-2 3.500-2 5 0M6.500 12c1.500 2 3.500 2 5 0" fill="none" stroke="#fff" stroke-width="1.500"/></svg>
<svg class="abs" style="left:152px;top:1025px" width="22" height="20" viewBox="0 0 22 20"><circle cx="10.500" cy="10.500" r="7" fill="none" stroke="#4fa0ee" stroke-width="3.400"/><path d="M4.500 10.500h12" stroke="#4fa0ee" stroke-width="2.600"/><path d="M12 13h7" stroke="#245edb" stroke-width="3.500"/><path d="M2 9c3-6 12-9 18-6" fill="none" stroke="#6fc0f8" stroke-width="1.500"/></svg>
<div class="abs" style="left:182px;top:1020px;font-size:13px;font-weight:bold;color:#cfe0fb;line-height:16px">»</div>
<!-- task button -->
<div class="abs" style="left:199px;top:1023px;width:158px;height:25px;border-radius:3px;background:linear-gradient(#4a8cf5 0,#3a7cf0 15%,#3173ea 85%,#2a66d8 100%);box-shadow:inset 1px 1px 0 rgba(255,255,255,.25), inset -1px -1px 0 rgba(0,0,60,.25)"></div>
<svg class="abs" style="left:208px;top:1027px" width="17" height="17" viewBox="0 0 18 18">
 <path d="M5 1h8l4 4v12H5z" fill="#fbfbf5" stroke="#8a8fa8" stroke-width="1"/>
 <circle cx="7" cy="9.500" r="5.600" fill="#2f7de0" stroke="#1b4fa8" stroke-width="1"/>
 <path d="M3.500 9.600h7a3.500 3.300 0 1 0-1 2.600" fill="none" stroke="#fff" stroke-width="1.600"/>
</svg>
<div class="abs ui" style="left:228px;top:1028px;font-size:12px;line-height:15px;color:#fff;white-space:nowrap">笔记本鸿利在线论<span style="font-family:'Liberation Mono',monospace;font-size:10px;letter-spacing:1px">...</span></div>
<!-- keyboard / battery / plug -->
<svg class="abs" style="left:956px;top:1029px" width="16" height="16" viewBox="0 0 16 16"><path d="M3 1.500h10" stroke="#dfe6f4" stroke-width="1"/><rect x=".5" y="4.500" width="15" height="10" fill="#e8ecf4" stroke="#3a4668"/><path d="M2.500 7h11M2.500 9.500h11M4 12h8" stroke="#3a4668" stroke-width="1.200" stroke-dasharray="1.500 1"/></svg>
<div class="abs" style="left:979px;top:1023px;width:64px;height:23px;box-sizing:border-box;border:1px solid #b9d9a8;background:#78f43e;text-align:center;font-weight:bold;font-size:13px;line-height:21px;color:#000;font-family:'Liberation Mono',monospace">99%</div>
<div class="abs" style="left:1043px;top:1029px;width:4px;height:11px;background:#c8c8b8;border:1px solid #8c8c7c;box-sizing:border-box"></div>
<svg class="abs" style="left:1054px;top:1027px" width="19" height="17" viewBox="0 0 19 17"><path d="M0 8.500h4" stroke="#000" stroke-width="2.400"/><path d="M4 3.500h5a5 5 0 0 1 0 10H4z" fill="#000"/><path d="M12 5.500h6M12 11.500h6" stroke="#000" stroke-width="2.600"/><path d="M5.500 5h3" stroke="#fff" stroke-width="1"/></svg>
<!-- tray -->
<div class="abs" style="left:1090px;top:1020px;width:310px;height:30px;background:linear-gradient(#3aa0f3 0,#1a86e6 4px,#1580e0 20px,#126fd0 30px);border-left:1px solid #0c3f9a;box-shadow:inset 1px 0 0 #4fb0f8"></div>
<svg class="abs" style="left:1078px;top:1024px" width="24" height="24" viewBox="0 0 24 24"><rect x=".5" y=".5" width="22" height="22" fill="none" stroke="#cfe0fb" stroke-width="1" stroke-dasharray="1 1"/><circle cx="11.500" cy="11.500" r="9.300" fill="#2f86ea" stroke="#bfe0ff" stroke-width="1.300"/><path d="M9.500 7.500l4 4-4 4" fill="none" stroke="#fff" stroke-width="2.200"/></svg>
<svg class="abs" style="left:1100px;top:1027px" width="14" height="17" viewBox="0 0 14 17"><path d="M7 .8l6 2.200v5c0 4-2.500 6.500-6 8.200C3.500 14.500 1 12 1 8V3z" fill="#f6d21c" stroke="#8a6a08" stroke-width="1"/><path d="M7 4v5.500M7 11v1.800" stroke="#333" stroke-width="1.800"/></svg>
<svg class="abs" style="left:1117px;top:1026px" width="18" height="18" viewBox="0 0 18 18"><circle cx="9" cy="9" r="8" fill="#e4eaf6" stroke="#3a4878"/><circle cx="9" cy="9" r="6" fill="#1f3f9a"/><path d="M6.500 12.500v-7M11.500 12.500v-7M6.500 6c1.500-2 3.500-2 5 0M6.500 12c1.500 2 3.500 2 5 0" fill="none" stroke="#fff" stroke-width="1.500"/></svg>
<svg class="abs" style="left:1135px;top:1026px" width="18" height="18" viewBox="0 0 18 18"><circle cx="9" cy="9" r="8" fill="#f7c81e" stroke="#b98a0c" stroke-width="1"/><path d="M5 4v3.500a2.500 2.500 0 0 0 5 0V4M7.500 10v1.500a3 3 0 0 0 6 0V9.500" fill="none" stroke="#222" stroke-width="1.500"/><circle cx="13.500" cy="8.500" r="1.300" fill="#222"/></svg>
<svg class="abs" style="left:1153px;top:1026px" width="18" height="18" viewBox="0 0 18 18"><rect x="1" y="4" width="9" height="7" fill="#5a6a9a" stroke="#dfe6f4"/><path d="M2 13h8" stroke="#dfe6f4" stroke-width="1.500"/><path d="M12 3c2 2 2 6 0 8M14.500 1.500c3 3 3 8 0 11" fill="none" stroke="#e8eef8" stroke-width="1.200"/><path d="M8 11l6 6M14 11l-6 6" stroke="#e0201a" stroke-width="2"/></svg>
<svg class="abs" style="left:1170px;top:1026px" width="18" height="18" viewBox="0 0 18 18"><rect x="6" y="1" width="10" height="8" fill="#7fb6f0" stroke="#dfe8f8"/><rect x="1" y="6" width="10" height="8" fill="#5f9ae6" stroke="#dfe8f8"/><path d="M3 16h7M9 11h6" stroke="#c8d4ea" stroke-width="1.500"/></svg>
<svg class="abs" style="left:1189px;top:1026px" width="18" height="18" viewBox="0 0 18 18"><rect x="6" y="1" width="10" height="8" fill="#4a5a8a" stroke="#c8d0e4"/><rect x="1" y="6" width="10" height="8" fill="#3f4e7c" stroke="#c8d0e4"/><path d="M8 9l7 7M15 9l-7 7" stroke="#e0201a" stroke-width="2.200"/></svg>
<svg class="abs" style="left:1208px;top:1026px" width="16" height="18" viewBox="0 0 16 18"><circle cx="7" cy="7.500" r="6" fill="#8f96a8" stroke="#4a5064"/><circle cx="6" cy="6.500" r="2.500" fill="#c8ccd8"/><path d="M10 11l5 6" stroke="#5f86d0" stroke-width="1.500"/></svg>
<svg class="abs" style="left:1226px;top:1026px" width="17" height="18" viewBox="0 0 17 18"><rect x="0" y="0" width="17" height="18" fill="#0a0a0a"/><path d="M1 9l7.500-7.500L16 9l-7.500 7.500z" fill="#22c8e8"/><path d="M8.500 1.500L16 9H4z" fill="#fff"/><path d="M1 1h15" stroke="#e03020" stroke-width="1"/></svg>
<svg class="abs" style="left:1245px;top:1027px" width="16" height="17" viewBox="0 0 16 17"><rect x="3.500" y=".5" width="9" height="7" fill="#1a1a1a" stroke="#e8e8e8"/><path d="M1 10h14v3H1z" fill="#111" stroke="#e8e8e8" stroke-width=".8"/><path d="M0 15.500h16" stroke="#111" stroke-width="2"/><path d="M5.500 3h5M5.500 5h5" stroke="#ddd" stroke-width="1"/></svg>
<svg class="abs" style="left:1262px;top:1026px" width="18" height="18" viewBox="0 0 18 18"><circle cx="11" cy="4" r="3" fill="#7fb0e8"/><path d="M6.500 14c0-5 2-7 4.500-7s4.500 2 4.500 7z" fill="#5f94da"/><circle cx="5.500" cy="6" r="3" fill="#8fd46a"/><path d="M1 16c0-5 2-7 4.500-7S10 11 10 16z" fill="#6fbf4a"/><circle cx="13" cy="13" r="4.300" fill="#e0281e" stroke="#fff" stroke-width=".8"/><path d="M11.200 11.200l3.600 3.600M14.800 11.200l-3.600 3.600" stroke="#fff" stroke-width="1.400"/></svg>
<svg class="abs" style="left:1280px;top:1027px" width="15" height="16" viewBox="0 0 15 16"><path d="M2 7l6-3 6 5-6 4z" fill="#5fb84a" stroke="#2a6a22"/><path d="M2 7v3l6 4v-1zM14 9v3l-6 2" fill="#8a9a8a" stroke="#3a4a3a" stroke-width=".8"/><path d="M4 1l3 3-2 .5z" fill="#3fa83a"/></svg>
<svg class="abs" style="left:1297px;top:1026px" width="18" height="18" viewBox="0 0 18 18"><rect x="0" y="0" width="18" height="18" fill="#f4f4f4" stroke="#222"/><path d="M4 16v-4M7.500 16V9M11 16V6M14.500 16V3" stroke="#111" stroke-width="2.200"/><path d="M1 1l9 9M10 1l-9 9" stroke="#e0201a" stroke-width="2.200"/></svg>
<svg class="abs" style="left:1316px;top:1026px" width="17" height="18" viewBox="0 0 17 18"><rect width="17" height="18" fill="#1a6a2a"/><circle cx="8.500" cy="9" r="7.500" fill="#3fb84a" stroke="#e8f8e8"/><path d="M5 11c-1-3 1-6 4-6l-1 3M12 7c1 3-1 6-4 6l1-3" fill="#fff" stroke="#fff" stroke-width="1.200"/></svg>
<svg class="abs" style="left:1334px;top:1026px" width="16" height="18" viewBox="0 0 16 18"><rect x=".5" y=".5" width="15" height="17" fill="#f4f4f0" stroke="#222"/><path d="M2 2v14" stroke="#222" stroke-width="1.500"/><path d="M3 2.500l8 3.500-8 3.500z" fill="#2fa83a"/><rect x="8" y="9" width="6" height="7" fill="#dfe4ec" stroke="#444" stroke-width=".8"/></svg>
<div class="abs ui" style="left:1359px;top:1028px;font-size:12px;line-height:15px;color:#e8f0fb;font-family:'Liberation Mono',monospace;letter-spacing:-.5px;font-size:11px">0:11</div>
<!-- tooltip -->
<div class="abs ui" style="left:1107px;top:1008px;width:108px;height:18px;box-sizing:border-box;border:1px solid #000;background:#ffffe1;font-size:12px;line-height:15px;box-shadow:1px 1px 0 rgba(0,0,0,.4);padding-left:3px;white-space:nowrap;color:#000">正在下载更新<span style="font-family:'Liberation Mono',monospace;font-size:10px">: 19%</span></div>
<!--CHROME-BOTTOM-END-->
</body>
</html>
